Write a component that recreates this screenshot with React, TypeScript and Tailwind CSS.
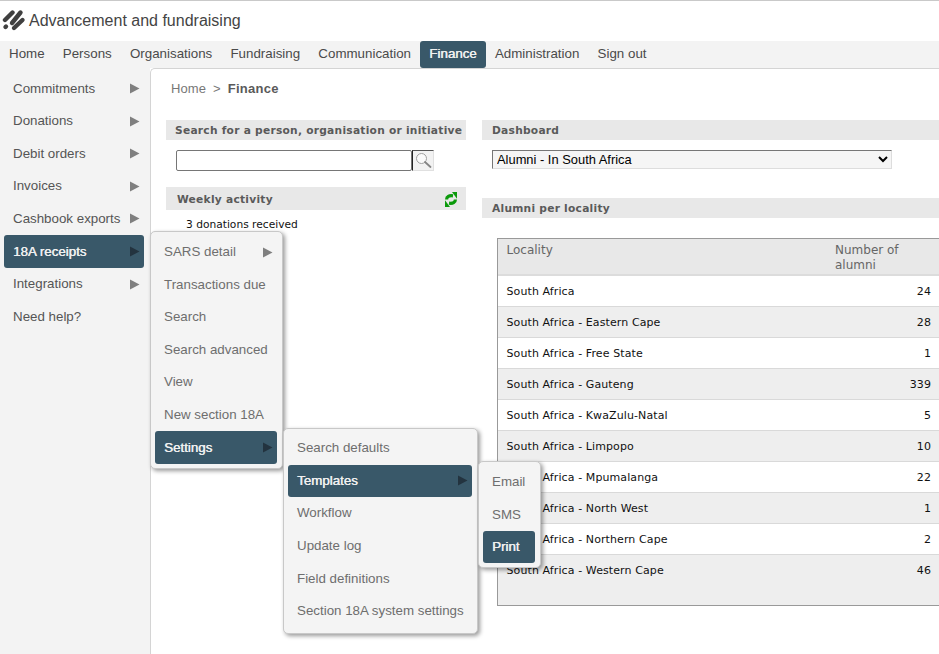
import React from "react";

const ARIAL = "font-['Liberation_Sans',Arial,sans-serif]";
const VERD = "font-['DejaVu_Sans',Verdana,sans-serif]";
const ACTIVE = "bg-[#395869] text-[#f0f0f0] [text-shadow:0.4px_0_0_#f0f0f0]";

function Arrow({ active = false }: { active?: boolean }) {
  return (
    <svg width="10" height="11" viewBox="0 0 10 11" className="shrink-0">
      <polygon points="0,0.5 9.5,5.5 0,10.5" fill={active ? "#23333f" : "#7f7f7f"} />
    </svg>
  );
}

function Logo() {
  return (
    <svg width="24" height="24" viewBox="2 3 24 24">
      <g stroke="#404040" strokeWidth="4.4" strokeLinecap="round" fill="none">
        <path d="M5 14 L12.5 6.5" />
        <path d="M12 17 L20.5 6.5" />
        <path d="M5.5 21 L6 20.5" />
        <path d="M14 22 L22.5 14" />
      </g>
    </svg>
  );
}

function Refresh() {
  const half = (
    <>
      <path d="M1.6 7.5 C1.6 4.5 4 3.2 8 3.8" stroke="#0b9a0b" strokeWidth="3.2" fill="none" />
      <polygon points="7,0 12,0 12,6.8" fill="#0b9a0b" />
    </>
  );
  return (
    <svg width="12" height="15" viewBox="0 0 12 15">
      {half}
      <g transform="rotate(180 6 7.5)">{half}</g>
    </svg>
  );
}

const NAV = ["Home", "Persons", "Organisations", "Fundraising", "Communication", "Finance", "Administration", "Sign out"];
const SIDE: [string, boolean][] = [
  ["Commitments", true],
  ["Donations", true],
  ["Debit orders", true],
  ["Invoices", true],
  ["Cashbook exports", true],
  ["18A receipts", true],
  ["Integrations", true],
  ["Need help?", false],
];
const ROWS: [string, number][] = [
  ["South Africa", 24],
  ["South Africa - Eastern Cape", 28],
  ["South Africa - Free State", 1],
  ["South Africa - Gauteng", 339],
  ["South Africa - KwaZulu-Natal", 5],
  ["South Africa - Limpopo", 10],
  ["South Africa - Mpumalanga", 22],
  ["South Africa - North West", 1],
  ["South Africa - Northern Cape", 2],
  ["South Africa - Western Cape", 46],
];

function SectionHead({ children, extra = "" }: { children: React.ReactNode; extra?: string }) {
  return (
    <div className={`flex items-center whitespace-nowrap bg-[#e8e8e8] pt-px text-[10.67px] font-bold tracking-[0.25px] text-[#5a5a5a] ${VERD} ${extra}`}>
      {children}
    </div>
  );
}

type Item = { label: string; active?: boolean; arrow?: boolean };

function Flyout({ items, className, pad }: { items: Item[]; className: string; pad: string }) {
  return (
    <div className={`absolute z-10 flex flex-col rounded-[5px] border border-[#c8c8c8] bg-[#f4f4f4] shadow-[2px_2px_4px_rgba(0,0,0,0.4)] ${pad} ${className}`}>
      {items.map((it) => (
        <div
          key={it.label}
          className={`flex h-[32.6px] items-center justify-between rounded-[3px] pl-[9px] pr-[4px] text-[13.33px] ${
            it.active ? ACTIVE : "text-[#6e6e6e]"
          }`}
        >
          <span className="whitespace-nowrap">{it.label}</span>
          {it.arrow && <Arrow active={it.active} />}
        </div>
      ))}
    </div>
  );
}

export default function App() {
  return (
    <div className={`relative h-[654px] w-[939px] overflow-hidden bg-white ${ARIAL}`}>
      <div className="h-px bg-[#c9c9c9]" />
      <header className="flex h-[40px] items-center gap-[3px] pl-[2px]">
        <Logo />
        <span className="text-[16px] text-[#444]">Advancement and fundraising</span>
      </header>
      <nav className="flex h-[27px] items-stretch gap-[18.25px] bg-[#f3f3f3] pl-[9px] text-[13.33px] text-[#4a4a4a]">
        {NAV.map((n) =>
          n === "Finance" ? (
            <span key={n} className={`-mx-[9px] flex h-[27px] items-center rounded-[3px] px-[9px] pb-[2px] ${ACTIVE}`}>
              {n}
            </span>
          ) : (
            <span key={n} className="flex items-center pb-[2px]">{n}</span>
          )
        )}
      </nav>
      <div className="flex h-[586px]">
        <aside className="flex w-[150px] shrink-0 flex-col bg-[#f3f3f3] pt-[4.3px] pl-[4px] pr-[6px] text-[13.33px] text-[#555]">
          {SIDE.map(([label, arrow]) => {
            const active = label === "18A receipts";
            return (
              <div
                key={label}
                className={`flex h-[32.6px] shrink-0 items-center justify-between rounded-[3px] pl-[9px] pr-[4px] ${active ? ACTIVE : ""}`}
              >
                <span>{label}</span>
                {arrow && <Arrow active={active} />}
              </div>
            );
          })}
        </aside>
        <main className="min-w-0 flex-1 rounded-tl-[5px] border-t border-l border-[#d4d4d4] bg-white pt-[10px] pl-[15px]">
          <div className="flex h-[20px] items-center pl-[5px] text-[13px] tracking-[0.1px] text-[#777]">
            <span>Home</span>
            <span className="mx-[7px]">&gt;</span>
            <span className="font-bold tracking-[0.25px] text-[#5a5a5a]">Finance</span>
          </div>
          <div className="mt-[21px] flex gap-[16px]">
            <section className="w-[300px] shrink-0">
              <SectionHead extra="h-[20px] pl-[9px]">Search for a person, organisation or initiative</SectionHead>
              <div className="mt-[10px] flex pl-[10px]">
                <div className="h-[21px] w-[236px] rounded-[2px] border border-[#767676] bg-white" />
                <div className="flex h-[21px] w-[22px] items-center justify-center border border-[#e0e0e0] border-l-[#222] border-t-[#555] bg-[#f2f2f2]">
                  <svg width="17" height="17" viewBox="0 0 17 17" fill="none">
                    <circle cx="6.5" cy="6.5" r="5" stroke="#a0a0a0" strokeWidth="1" fill="#fafafa" />
                    <path d="M10 10 L15.5 15" stroke="#858585" strokeWidth="1.8" strokeLinecap="round" />
                  </svg>
                </div>
              </div>
              <SectionHead extra="mt-[16px] h-[23px] justify-between pl-[11px] pr-[9px]">
                <span className="pt-[2px]">Weekly activity</span>
                <Refresh />
              </SectionHead>
              <p className={`mt-[7px] pl-[20px] text-[10.67px] leading-[16px] text-[#111] ${VERD}`}>3 donations received</p>
            </section>
            <section className="min-w-0 flex-1">
              <SectionHead extra="h-[20px] pl-[10px]">Dashboard</SectionHead>
              <div className="mt-[10px] pl-[10px]">
                <select
                  defaultValue="a"
                  className="block h-[19px] w-[400px] border border-[#767676] border-r-[#ddd] border-b-[#ddd] bg-[#f5f5f5] pl-0 text-[12.9px] leading-none text-black"
                  style={{ appearance: "auto" }}
                >
                  <option value="a">Alumni - In South Africa</option>
                </select>
              </div>
              <SectionHead extra="mt-[29px] h-[20px] pl-[10px]">Alumni per locality</SectionHead>
              <div className={`mt-[20px] ml-[15px] h-[368px] w-[450px] border border-[#999] bg-[#eeeeee] text-[11px] ${VERD}`}>
                <div className="flex h-[37px] border-b-2 border-[#dcdcdc] bg-[#e8e8e8] pt-[4px] text-[12px] leading-[15px] text-[#666]">
                  <span className="w-[337px] pl-[8.5px]">Locality</span>
                  <span className="w-[90px]">Number of alumni</span>
                </div>
                {ROWS.map(([name, n], i) => (
                  <div
                    key={name}
                    className={`flex h-[31px] items-center justify-between pt-[2px] pl-[8.5px] pr-[15px] tracking-[0.1px] text-[#111] ${
                      i % 2 === 0 ? "bg-white" : "bg-[#eeeeee]"
                    } ${i < ROWS.length - 1 ? "border-b border-[#d9d9d9]" : ""}`}
                  >
                    <span>{name}</span>
                    <span>{n}</span>
                  </div>
                ))}
              </div>
            </section>
          </div>
        </main>
      </div>

      <Flyout
        className="left-[150px] top-[231px] w-[133px]"
        pad="pt-[3.8px] pb-[4px] pl-[4px] pr-[5px]"
        items={[
          { label: "SARS detail", arrow: true },
          { label: "Transactions due" },
          { label: "Search" },
          { label: "Search advanced" },
          { label: "View" },
          { label: "New section 18A" },
          { label: "Settings", active: true, arrow: true },
        ]}
      />
      <Flyout
        className="left-[283px] top-[428px] w-[195px]"
        pad="pt-[3px] pb-[5px] pl-[4px] pr-[5px]"
        items={[
          { label: "Search defaults" },
          { label: "Templates", active: true, arrow: true },
          { label: "Workflow" },
          { label: "Update log" },
          { label: "Field definitions" },
          { label: "Section 18A system settings" },
        ]}
      />
      <Flyout
        className="left-[478px] top-[461px] w-[63px]"
        pad="pt-[3.7px] pb-[4px] pl-[4px] pr-[5px]"
        items={[{ label: "Email" }, { label: "SMS" }, { label: "Print", active: true }]}
      />
    </div>
  );
}
